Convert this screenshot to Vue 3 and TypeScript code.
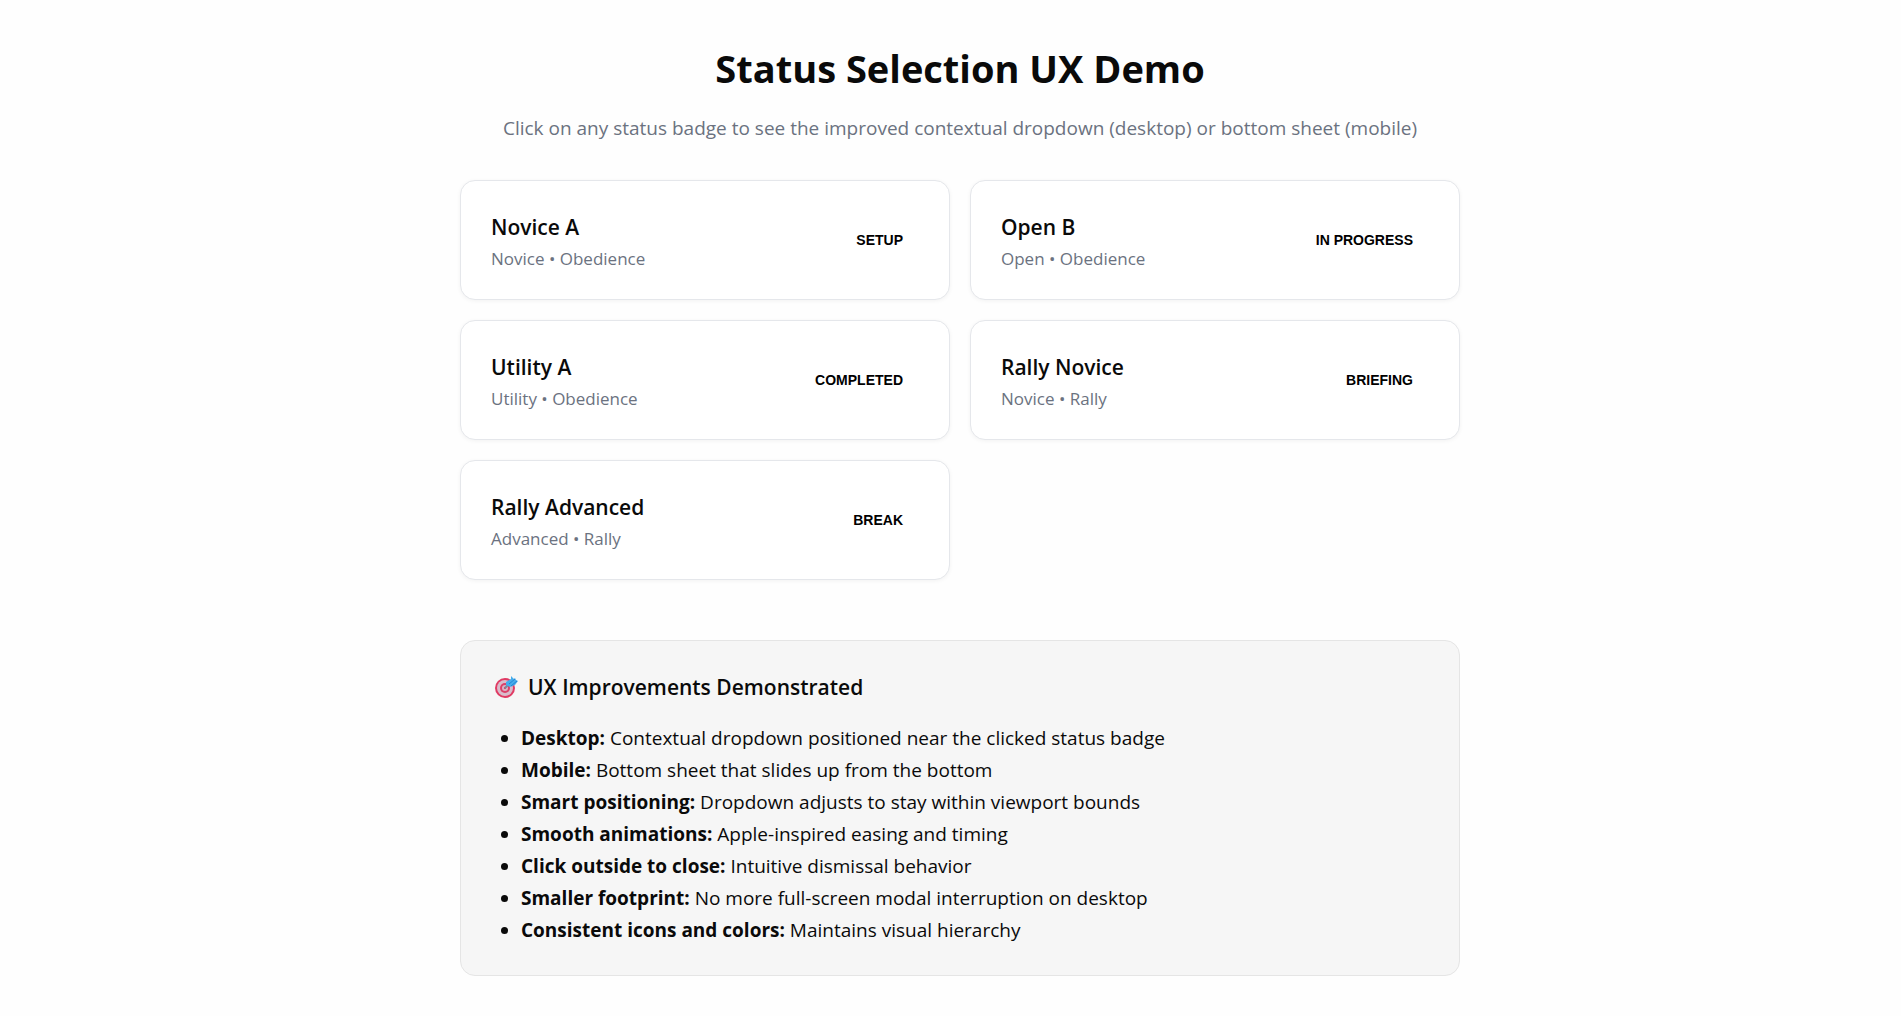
<script setup lang="ts">
interface TrialClass {
  name: string
  level: string
  element: string
  status: string
}

interface Improvement {
  label: string
  detail: string
}

const classes: TrialClass[] = [
  { name: 'Novice A', level: 'Novice', element: 'Obedience', status: 'Setup' },
  { name: 'Open B', level: 'Open', element: 'Obedience', status: 'In Progress' },
  { name: 'Utility A', level: 'Utility', element: 'Obedience', status: 'Completed' },
  { name: 'Rally Novice', level: 'Novice', element: 'Rally', status: 'Briefing' },
  { name: 'Rally Advanced', level: 'Advanced', element: 'Rally', status: 'Break' },
]

const improvements: Improvement[] = [
  { label: 'Desktop:', detail: 'Contextual dropdown positioned near the clicked status badge' },
  { label: 'Mobile:', detail: 'Bottom sheet that slides up from the bottom' },
  { label: 'Smart positioning:', detail: 'Dropdown adjusts to stay within viewport bounds' },
  { label: 'Smooth animations:', detail: 'Apple-inspired easing and timing' },
  { label: 'Click outside to close:', detail: 'Intuitive dismissal behavior' },
  { label: 'Smaller footprint:', detail: 'No more full-screen modal interruption on desktop' },
  { label: 'Consistent icons and colors:', detail: 'Maintains visual hierarchy' },
]
</script>

<template>
  <main class="page">
    <div class="container">
      <header class="intro">
        <h1>Status Selection UX Demo</h1>
        <p>Click on any status badge to see the improved contextual dropdown (desktop) or bottom sheet (mobile)</p>
      </header>

      <section class="cards">
        <article v-for="item in classes" :key="item.name" class="card">
          <div class="info">
            <h2>{{ item.name }}</h2>
            <p>{{ item.level }} • {{ item.element }}</p>
          </div>
          <button type="button" class="badge">{{ item.status }}</button>
        </article>
      </section>

      <section class="panel">
        <h2>
          <svg class="target" viewBox="0 0 28 28" aria-hidden="true">
            <circle cx="14" cy="15" r="10" fill="#e03a63" />
            <circle cx="14" cy="15" r="8" fill="#d9bccb" />
            <circle cx="14" cy="15" r="5" fill="#dc3f68" />
            <circle cx="14" cy="15" r="3" fill="#d9b3c5" />
            <circle cx="14" cy="15" r="1" fill="#c52f59" />
            <path d="M14 15 20 9" stroke="#7d8798" stroke-width="2" />
            <path d="M15 12 15 9 20 6 20 3 23 6 24 5 25 7 27 8 24 12 19 14Z" fill="#45adec" />
            <path d="M18 11 24 6M20 13 26 8" stroke="#2583d3" stroke-width="1" />
          </svg>
          UX Improvements Demonstrated
        </h2>
        <ul>
          <li v-for="entry in improvements" :key="entry.label">
            <strong>{{ entry.label }}</strong> {{ entry.detail }}
          </li>
        </ul>
      </section>
    </div>
  </main>
</template>

<style>
body {
  background: #fefefe;
}
</style>

<style scoped>
.page {
  box-sizing: border-box;
  padding: 40px 0 40px 19px;
  color: #0a0a0a;
  font-family: "Segoe UI", "Open Sans", "Noto Sans", sans-serif;
  font-size: 19px;
  line-height: 32px;
}

.container {
  max-width: 1000px;
  margin: 0 auto;
}

h1,
h2,
p,
ul {
  margin: 0;
}

.intro {
  margin-bottom: 36px;
  text-align: center;
}

h1 {
  margin-bottom: 16px;
  font-size: 38px;
  font-weight: 700;
  line-height: 56px;
}

.intro p {
  color: #6b7280;
}

.cards {
  display: grid;
  grid-template-columns: repeat(auto-fit, minmax(400px, 1fr));
  gap: 20px;
}

.card {
  display: flex;
  align-items: center;
  justify-content: space-between;
  padding: 28px 30px;
  background: #ffffff;
  border: 1px solid #e5e7eb;
  border-radius: 15px;
  box-shadow: 0 1px 4px rgba(0, 0, 0, 0.05);
}

h2 {
  font-size: 21px;
  font-weight: 600;
  line-height: 36px;
}

.card h2 {
  margin-bottom: 2px;
}

.card p {
  color: #6b7280;
  font-size: 17px;
  line-height: 24px;
}

.badge {
  padding: 8px 16px;
  background: none;
  border: 0;
  color: #000000;
  font-family: Arial, "Liberation Sans", sans-serif;
  font-size: 14px;
  font-weight: 700;
  line-height: 16px;
  text-transform: uppercase;
  cursor: pointer;
}

.panel {
  margin-top: 60px;
  padding: 28px 30px 29px;
  background: #f6f6f6;
  border: 1px solid #e5e5e5;
  border-radius: 15px;
}

.panel h2 {
  display: flex;
  align-items: center;
  gap: 9px;
  margin-bottom: 17px;
}

.target {
  width: 28px;
  height: 28px;
}

ul {
  padding-left: 30px;
}
</style>
